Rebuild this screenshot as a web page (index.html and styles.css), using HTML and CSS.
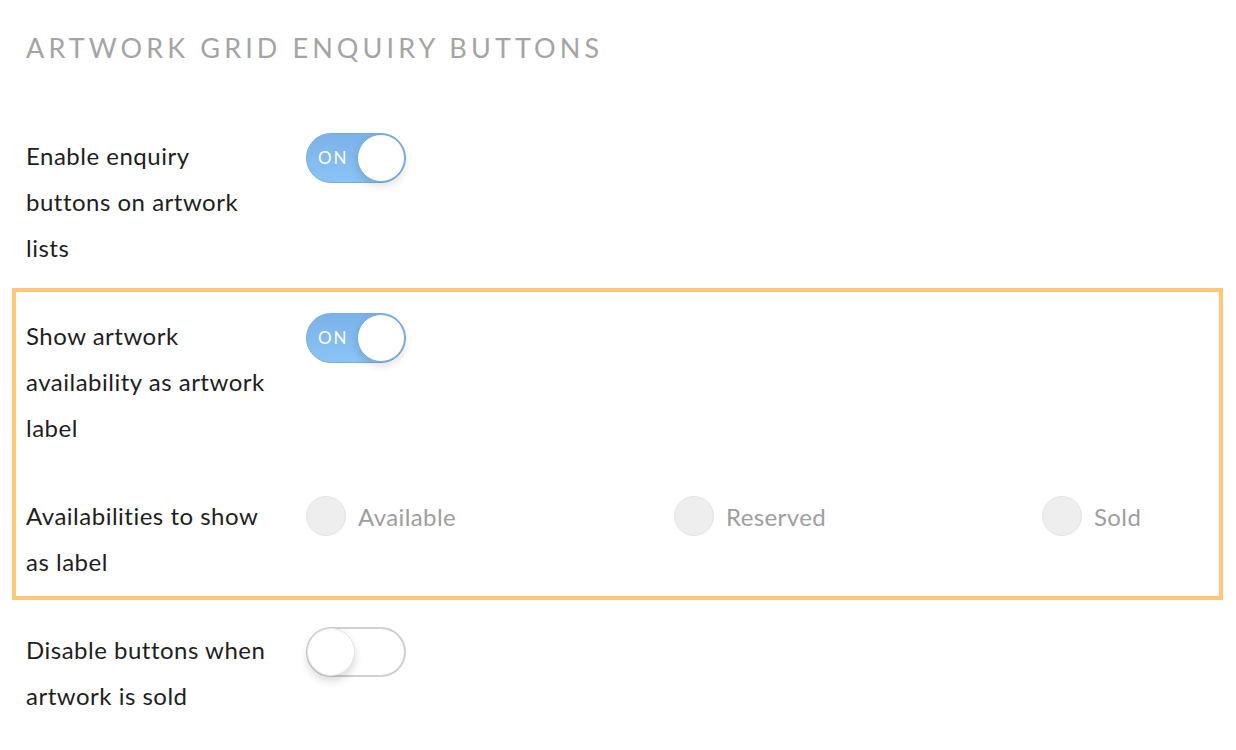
FILE: index.html
```html
<!DOCTYPE html>
<html>
<head>
<meta charset="utf-8">
<link rel="stylesheet" href="styles.css">
</head>
<body>
<div class="page">
  <h1 class="title">ARTWORK GRID ENQUIRY BUTTONS</h1>

  <div class="row row-first">
    <div class="label">Enable enquiry<br>buttons on artwork<br>lists</div>
    <div class="control">
      <div class="toggle on"><span class="toggle-text">ON</span><span class="knob"></span></div>
    </div>
  </div>

  <div class="highlight">
    <div class="row">
      <div class="label">Show artwork<br>availability as artwork<br>label</div>
      <div class="control">
        <div class="toggle on"><span class="toggle-text">ON</span><span class="knob"></span></div>
      </div>
    </div>
    <div class="row row-radios">
      <div class="label">Availabilities to show<br>as label</div>
      <div class="control radios">
        <label class="radio"><span class="dot"></span><span class="radio-text">Available</span></label>
        <label class="radio"><span class="dot"></span><span class="radio-text">Reserved</span></label>
        <label class="radio"><span class="dot"></span><span class="radio-text">Sold</span></label>
      </div>
    </div>
  </div>

  <div class="row row-last">
    <div class="label">Disable buttons when<br>artwork is sold</div>
    <div class="control">
      <div class="toggle off"><span class="knob"></span></div>
    </div>
  </div>
</div>
</body>
</html>
```

FILE: styles.css
```css
html, body {
  margin: 0;
  padding: 0;
  background: #ffffff;
}

body {
  font-family: "Lato", "Liberation Sans", sans-serif;
  color: #222222;
}

.page {
  padding: 33px 13px 0 12px;
}

.title {
  margin: 0 0 70px 14px;
  font-size: 27px;
  line-height: 30px;
  font-weight: 400;
  letter-spacing: 4.1px;
  color: #a4a4a4;
}

.row {
  display: flex;
  align-items: flex-start;
}

.row-first,
.row-last {
  padding-left: 14px;
}

.label {
  width: 270px;
  margin-right: 10px;
  flex-shrink: 0;
  white-space: nowrap;
  font-size: 24px;
  line-height: 46px;
  letter-spacing: 0.5px;
  color: #1e1e1e;
}

.control {
  display: flex;
  align-items: center;
  height: 50px;
}

.highlight {
  margin-top: 17px;
  border: 4px solid #ffc777;
  padding: 21px 10px 11px 10px;
}

.highlight .row + .row {
  margin-top: 42px;
}

.row-last {
  margin-top: 27px;
}

.toggle {
  position: relative;
  width: 100px;
  height: 50px;
  box-sizing: border-box;
  border-radius: 25px;
}

.toggle.on {
  background: linear-gradient(180deg, #7bb2e8 0%, #8ac3f5 100%);
  border: 1px solid #78abdd;
}

.toggle.off {
  background: #ffffff;
  border: 2px solid #d0d0d0;
}

.toggle-text {
  position: absolute;
  left: 11px;
  top: 0;
  line-height: 48px;
  font-size: 17px;
  letter-spacing: 2px;
  color: #ffffff;
}

.knob {
  position: absolute;
  top: 0;
  width: 48px;
  height: 48px;
  border-radius: 50%;
  background: #ffffff;
  box-sizing: border-box;
}

.toggle.on .knob {
  right: 0;
  border: 1px solid #7aacdd;
  box-shadow: 0 4px 8px rgba(0, 0, 0, 0.12);
}

.toggle.off .knob {
  left: -1px;
  top: -1px;
  border: 1px solid #e4e4e4;
  box-shadow: 0 5px 9px rgba(0, 0, 0, 0.15);
}

.row-radios .control {
  height: 46px;
}

.radios {
  display: grid;
  grid-template-columns: 368px 368px 200px;
}

.radio {
  display: flex;
  align-items: center;
  gap: 12px;
}

.dot {
  width: 40px;
  height: 40px;
  box-sizing: border-box;
  border-radius: 50%;
  background: #eeeeee;
  border: 1px solid #e4e4e4;
}

.radio-text {
  font-size: 24px;
  letter-spacing: 0.4px;
  color: #9e9e9e;
}
```
